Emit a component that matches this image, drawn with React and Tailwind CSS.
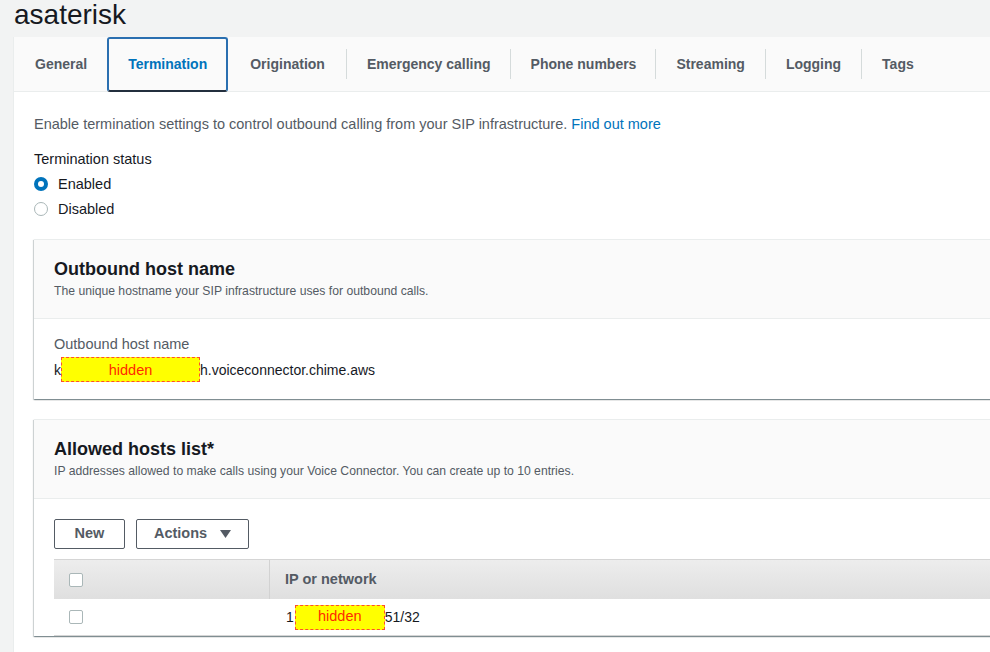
import React from 'react';

const tabs = ['General', 'Termination', 'Origination', 'Emergency calling', 'Phone numbers', 'Streaming', 'Logging', 'Tags'];

function Hidden({ className }) {
    return (
        <span className={`inline-flex items-center justify-center h-[25px] bg-[#ffff00] border border-dashed border-[#ff4d2e] text-[#ff2a00] text-[14.5px] ${className}`}>
            hidden
        </span>
    );
}

function Card({ title, subtitle, children }) {
    return (
        <div className="bg-white border-t border-[#eaeded] shadow-[0_1px_1px_0_rgba(0,28,36,0.3),1px_1px_1px_0_rgba(0,28,36,0.15),-1px_1px_1px_0_rgba(0,28,36,0.15)]">
            <div className="bg-[#fafafa] border-b border-[#eaeded] px-5 pt-[18px] pb-[19px]">
                <h2 className="text-[18px] leading-[22px] font-bold text-[#16191f]">{title}</h2>
                <p className="text-[12.2px] leading-4 text-[#545b64] mt-[3px]">{subtitle}</p>
            </div>
            {children}
        </div>
    );
}

function Checkbox() {
    return <span className="block w-[14px] h-[14px] border border-[#aab7b8] rounded-[2px] bg-white" />;
}

export default function App() {
    return (
        <div className="w-[990px] h-[652px] overflow-hidden bg-[#f2f3f3] text-[#16191f]" style={{ fontFamily: '"Liberation Sans", Arial, sans-serif' }}>
            <h1 className="pl-[14px] text-[28px] leading-[28px] pt-[1px] h-[37px] text-[#16191f]">asaterisk</h1>

            <div className="ml-[13px] w-[1100px] h-[640px] bg-white border-l border-[#eaeded]">
                {/* tab bar */}
                <div className="flex items-center h-[55px] bg-[#fafafa] border-b border-[#eaeded]">
                    {tabs.map((t, i) => {
                        const active = t === 'Termination';
                        let pad = 'px-[20px]';
                        if (i === 0) pad = 'pl-[21px] pr-[20px]';
                        if (i === 2) pad = 'pl-[22px] pr-[21px]';
                        if (i === 3 || i === 4) pad = 'pl-[20px] pr-[19px]';
                        return (
                            <React.Fragment key={t}>
                                {i > 2 && <span className="w-px h-[30px] bg-[#d5dbdb]" />}
                                <div
                                    className={
                                        active
                                            ? 'h-[55px] px-[19px] flex items-center pt-px text-[14px] font-bold text-[#0073bb] border-2 border-[#2a6fb0] border-b-[#232f3e] rounded-[3px]'
                                            : `h-[55px] ${pad} flex items-center pt-px text-[14px] font-bold text-[#545b64]`
                                    }
                                >
                                    {t}
                                </div>
                            </React.Fragment>
                        );
                    })}
                </div>

                <div className="px-5 pt-[22px]">
                    <p className="text-[14.5px] leading-5 text-[#545b64]">
                        Enable termination settings to control outbound calling from your SIP infrastructure.{' '}
                        <a className="text-[#0073bb]">Find out more</a>
                    </p>

                    <div className="mt-[15px] text-[14.5px] leading-5">Termination status</div>
                    <div className="mt-[5px] flex items-center gap-[10px] h-5">
                        <span className="w-[14px] h-[14px] rounded-full bg-[#0073bb] flex items-center justify-center">
                            <span className="w-[6px] h-[6px] rounded-full bg-white" />
                        </span>
                        <span className="text-[14.5px] leading-5">Enabled</span>
                    </div>
                    <div className="mt-[5px] flex items-center gap-[10px] h-5">
                        <span className="w-[14px] h-[14px] rounded-full border border-[#aab7b8] bg-white" />
                        <span className="text-[14.5px] leading-5">Disabled</span>
                    </div>

                    <div className="mt-[20px]">
                        <Card title="Outbound host name" subtitle="The unique hostname your SIP infrastructure uses for outbound calls.">
                            <div className="px-5 pt-[15px] pb-[17px]">
                                <div className="text-[14.5px] leading-5 text-[#545b64]">Outbound host name</div>
                                <div className="mt-[3px] flex items-center text-[14px] leading-5 text-[#16191f]">
                                    <span>k</span>
                                    <Hidden className="w-[139px]" />
                                    <span>h.voiceconnector.chime.aws</span>
                                </div>
                            </div>
                        </Card>
                    </div>

                    <div className="mt-[20px]">
                        <Card title="Allowed hosts list*" subtitle="IP addresses allowed to make calls using your Voice Connector. You can create up to 10 entries.">
                            <div className="px-5 pt-5">
                                <div className="flex gap-[11px]">
                                    <button className="h-[30px] w-[71px] border border-[#545b64] rounded-[2px] bg-white text-[14.5px] font-bold text-[#545b64]">
                                        New
                                    </button>
                                    <button className="h-[30px] w-[113px] border border-[#545b64] rounded-[2px] bg-white text-[14.5px] font-bold text-[#545b64] flex items-center justify-center gap-[13px]">
                                        Actions
                                        <svg width="11" height="8" viewBox="0 0 11 8">
                                            <path d="M0 0 H11 L5.5 8 Z" fill="#545b64" />
                                        </svg>
                                    </button>
                                </div>

                                <div className="mt-[10px]">
                                    <div className="flex h-[40px] border-t border-[#d5d5d5] bg-gradient-to-b from-[#ededed] to-[#dfdfdf]">
                                        <div className="w-[216px] flex items-center pl-[15px] border-r border-[#d2d2d2]">
                                            <Checkbox />
                                        </div>
                                        <div className="flex items-center pl-[15px] text-[14.5px] font-bold text-[#545b64]">IP or network</div>
                                    </div>
                                    <div className="flex h-[37px] border-b border-[#d5d5d5] bg-white">
                                        <div className="w-[216px] flex items-center pl-[15px]">
                                            <Checkbox />
                                        </div>
                                        <div className="flex items-center pl-[16px] text-[14px] text-[#16191f]">
                                            <span>1</span>
                                            <Hidden className="w-[90px] ml-[1px]" />
                                            <span>51/32</span>
                                        </div>
                                    </div>
                                </div>
                            </div>
                        </Card>
                    </div>
                </div>
            </div>
        </div>
    );
}
